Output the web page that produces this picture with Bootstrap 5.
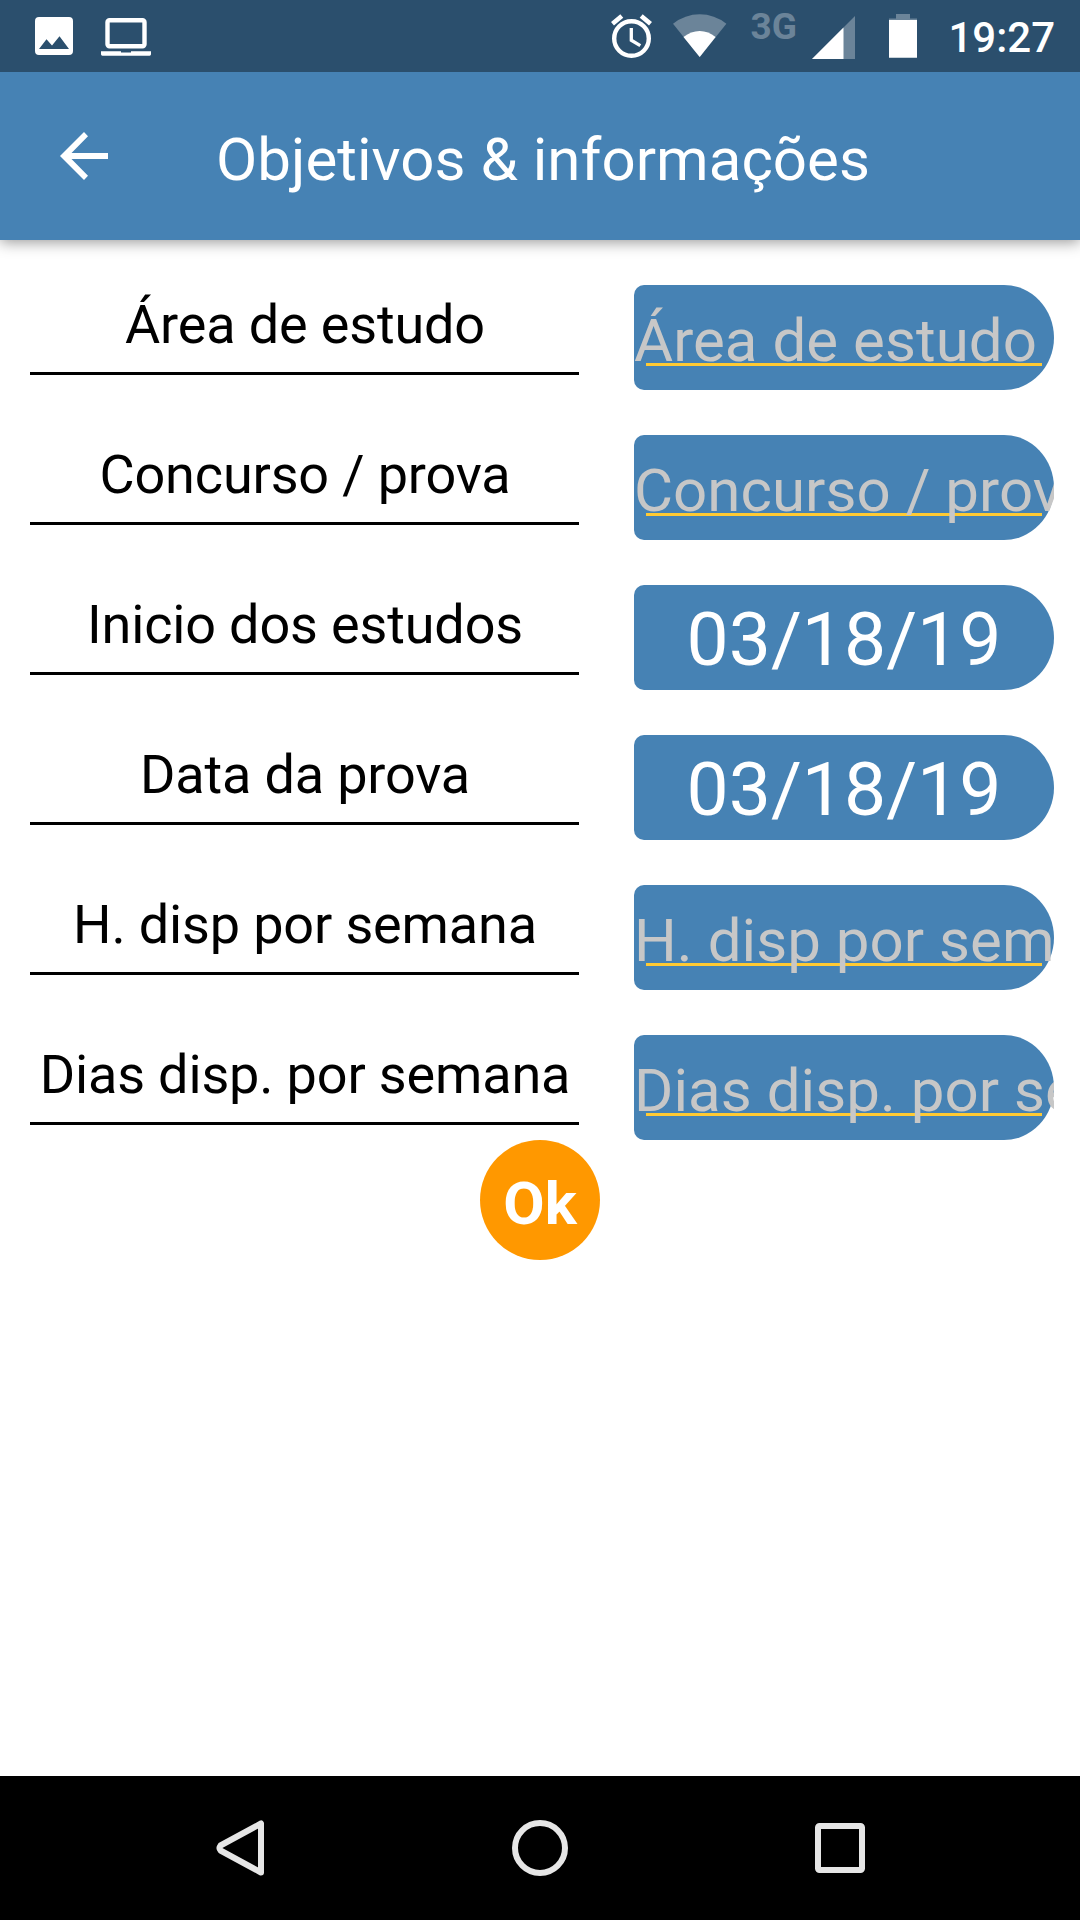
<!DOCTYPE html>
<html lang="pt-BR">
<head>
<meta charset="utf-8">
<meta name="viewport" content="width=device-width, initial-scale=1">
<title>Objetivos &amp; informações</title>
<link href="https://cdn.jsdelivr.net/npm/bootstrap@5.3.0/dist/css/bootstrap.min.css" rel="stylesheet">
<style>
  body { font-family: Roboto, "Noto Sans", sans-serif; color: #000; background: #fff; height: 1920px; overflow: hidden; }
  svg { display: block; flex: none; }
  .status-bar { height: 72px; background: #2b4f6d; padding: 0 25px 0 35px; }
  .icon-photo { margin-top: 17px; }
  .icon-laptop { margin: 17.500px 0 0 28px; }
  .icon-alarm { margin-top: 14px; }
  .icon-wifi { margin: 14px 0 0 20px; }
  .icon-signal { margin-top: 16px; }
  .icon-battery { margin: 14px 0 0 34px; }
  .net-type { font-size: 37px; font-weight: 700; line-height: 53px; color: #6b8499; width: 47px; margin: 0 15px 0 23px; }
  .clock { font-size: 42px; font-weight: 500; line-height: 75px; margin-left: 31px; }
  .app-bar { height: 168px; background: #4682b4; box-shadow: 0 2px 14px rgba(0,0,0,.42); padding-left: 60px; }
  .app-title { font-size: 60px; line-height: 160px; padding-top: 7px; font-weight: 400; margin-left: 108px; letter-spacing: .04px; }
  .form-rows { padding: 45px 26px 0 30px; gap: 45px; }
  .field-row { height: 105px; }
  .field-label { width: 549px; font-size: 54px; line-height: 79px; height: 90px; border-bottom: 3px solid #000; letter-spacing: -.15px; padding-left: 1px; }
  .pill { width: 420px; height: 105px; background: #4682b4; border-radius: 10px 50px 50px 10px / 10px 52.500px 52.500px 10px; }
  .pill-hint::before { content: ""; position: absolute; left: 12px; right: 12px; top: 78px; height: 3px; background: #ffca33; }
  .hint-text { height: 105px; line-height: 111px; font-size: 60px; color: #c7c7c7; letter-spacing: .04px; }
  .date-text { font-size: 75px; line-height: 109px; }
  .ok-btn, .ok-btn:hover { width: 120px; height: 120px; background: #ff9800; color: #fff; font-size: 60px; font-weight: 700; line-height: 127px; }
  .nav-bar { height: 144px; padding: 0 215px 0 216px; }
</style>
</head>
<body class="d-flex flex-column">
  <header class="status-bar d-flex align-items-start text-white flex-shrink-0 position-relative z-1">
    <svg class="icon-photo" width="38" height="38" viewBox="0 0 38 38"><path fill="#fff" fill-rule="evenodd" d="M4 0h30a4 4 0 0 1 4 4v30a4 4 0 0 1-4 4H4a4 4 0 0 1-4-4V4a4 4 0 0 1 4-4zM4 32h30L24.500 19.200 17 28.500 11.500 22.200z"/></svg>
    <svg class="icon-laptop" width="50" height="38" viewBox="0 0 50 38"><rect x="6.500" y="2.200" width="37" height="26" rx="2" fill="none" stroke="#fff" stroke-width="4.400"/><path fill="#fff" d="M0 33.300h20v1.200h10v-1.200h20v3q0 1.400-1.400 1.400H1.400Q0 37.700 0 36.300z"/></svg>
    <div class="d-flex align-items-start ms-auto">
      <svg class="icon-alarm" width="42" height="44" viewBox="0 0 42 44"><g fill="none" stroke="#fff"><circle cx="20.500" cy="24.500" r="17.300" stroke-width="4.400"/><path stroke-width="3.300" d="M20.300 14v12.200l9 5.500"/><path stroke-width="4.600" d="M1.500 9.800 10.800 2M39.500 9.800 30.200 2"/></g></svg>
      <svg class="icon-wifi" width="54" height="44" viewBox="0 0 54 44"><path fill="#6b8499" d="M0 9.700Q12 .2 26.700 .2T53.400 9.700L26.700 43z"/><path fill="#fff" d="M10.500 23Q18 17 26.700 17T42.600 23L26.700 43z"/></svg>
      <span class="net-type">3G</span>
      <svg class="icon-signal" width="43" height="43" viewBox="0 0 43 43"><path fill="#6b8499" d="M43 0v43H0z"/><path fill="#fff" d="M31.500 11.500V43H0z"/></svg>
      <svg class="icon-battery" width="28" height="44" viewBox="0 0 28 44"><path fill="#6b8499" d="M7 0h14v4.500h7V9H0V4.500h7z"/><path fill="#fff" d="M0 6h28v37.700H0z"/></svg>
      <span class="clock">19:27</span>
    </div>
  </header>
  <nav class="app-bar d-flex align-items-center text-white flex-shrink-0">
    <svg width="48" height="48" viewBox="0 0 48 48"><path fill="#fff" d="M48 21H11.500L28 4.200 24 0 0 24l24 24 4-4.200L11.500 27H48z"/></svg>
    <h1 class="app-title mb-0">Objetivos &amp; informações</h1>
  </nav>
  <main class="flex-grow-1">
    <div class="form-rows d-flex flex-column">
      <div class="field-row d-flex justify-content-between">
        <div class="field-label text-center text-nowrap">Área de estudo</div>
        <div class="pill pill-hint position-relative"><div class="hint-text position-relative overflow-hidden text-nowrap">Área de estudo</div></div>
      </div>
      <div class="field-row d-flex justify-content-between">
        <div class="field-label text-center text-nowrap">Concurso / prova</div>
        <div class="pill pill-hint position-relative"><div class="hint-text position-relative overflow-hidden text-nowrap">Concurso / prova</div></div>
      </div>
      <div class="field-row d-flex justify-content-between">
        <div class="field-label text-center text-nowrap">Inicio dos estudos</div>
        <div class="pill date-text text-center text-white">03/18/19</div>
      </div>
      <div class="field-row d-flex justify-content-between">
        <div class="field-label text-center text-nowrap">Data da prova</div>
        <div class="pill date-text text-center text-white">03/18/19</div>
      </div>
      <div class="field-row d-flex justify-content-between">
        <div class="field-label text-center text-nowrap">H. disp por semana</div>
        <div class="pill pill-hint position-relative"><div class="hint-text position-relative overflow-hidden text-nowrap">H. disp por semana</div></div>
      </div>
      <div class="field-row d-flex justify-content-between">
        <div class="field-label text-center text-nowrap">Dias disp. por semana</div>
        <div class="pill pill-hint position-relative"><div class="hint-text position-relative overflow-hidden text-nowrap">Dias disp. por semana</div></div>
      </div>
    </div>
    <div class="d-flex justify-content-center">
      <button type="button" class="ok-btn btn rounded-circle border-0 p-0">Ok</button>
    </div>
  </main>
  <footer class="nav-bar bg-black d-flex align-items-center justify-content-between flex-shrink-0">
    <svg width="48" height="56" viewBox="0 0 48 56"><path fill="none" stroke="#e6e6e6" stroke-width="6" stroke-linejoin="round" d="M45 3.500v49L4.500 30.500Q2.500 28 4.500 25.500z"/></svg>
    <svg width="56" height="56" viewBox="0 0 56 56"><circle cx="28" cy="28" r="25" fill="none" stroke="#e6e6e6" stroke-width="6"/></svg>
    <svg width="50" height="50" viewBox="0 0 50 50"><rect x="3" y="3" width="44" height="44" rx="1.500" fill="none" stroke="#e6e6e6" stroke-width="6"/></svg>
  </footer>
<script src="https://cdn.jsdelivr.net/npm/bootstrap@5.3.0/dist/js/bootstrap.bundle.min.js"></script>
</body>
</html>
